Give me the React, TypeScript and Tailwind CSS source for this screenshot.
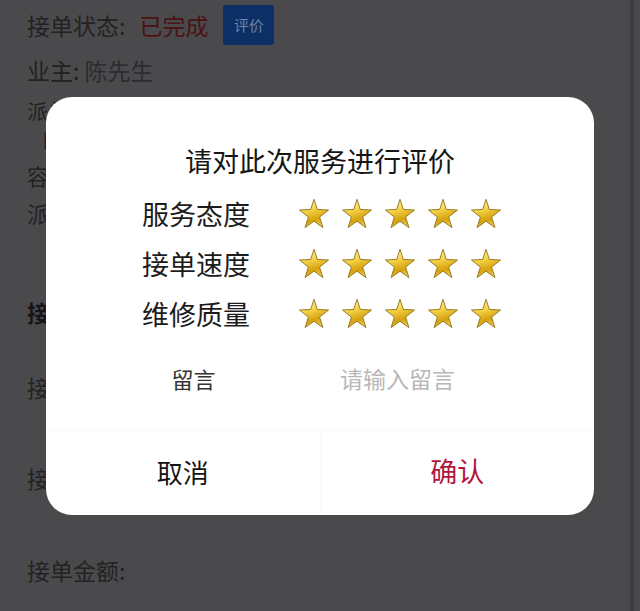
import React from 'react';

const font = { fontFamily: '"Noto Sans CJK SC", "Noto Sans", sans-serif' };

function Star() {
  return (
    <svg viewBox="0 0 24 24" className="w-[32px] h-[32px]">
      <defs>
        <linearGradient id="gold" x1="0.3" y1="0" x2="0.6" y2="1">
          <stop offset="0" stopColor="#fff7b8" />
          <stop offset="0.35" stopColor="#f6d64a" />
          <stop offset="0.72" stopColor="#d6a10e" />
          <stop offset="1" stopColor="#f0cf55" />
        </linearGradient>
      </defs>
      <polygon
        points="12,1 14.5,8.6 22.9,9 16.2,14.3 18.7,22.2 12,17.4 5.3,22.2 7.8,14.3 1.1,9 9.5,8.6"
        fill="url(#gold)"
        stroke="#8f7318"
        strokeWidth="0.7"
        strokeLinejoin="round"
      />
    </svg>
  );
}

function RatingRow({ label }: { label: string }) {
  return (
    <div className="flex items-center h-[50px]">
      <div className="w-[200px] text-center text-[27px] text-[#1c1c1c]">{label}</div>
      <div className="flex items-center gap-[11px] ml-[2px]">
        {[0, 1, 2, 3, 4].map((i) => (
          <Star key={i} />
        ))}
      </div>
    </div>
  );
}

export default function App() {
  return (
    <div className="relative w-[640px] h-[611px] overflow-hidden bg-[#4a4a4c]" style={font}>
      {/* dimmed page behind */}
      <div className="pl-[27px] pt-[5px] text-[23px] text-[#222] leading-[30px] whitespace-nowrap">
        <div className="flex items-center h-[40px]">
          <span className="leading-[40px]">接单状态:</span>
          <span className="ml-[14px] text-[#4a1214]">已完成</span>
          <span className="ml-[15px] w-[51px] h-[40px] rounded-[3px] bg-[#0c2f66] text-[15px] text-[#6f84a8] flex items-center justify-center">
            评价
          </span>
        </div>
        <div className="mt-[10px]">
          业主: <span className="text-[#2c2c2e]">陈先生</span>
        </div>
        <div className="mt-[10px] text-[21px]">派单时间:</div>
        <div className="pl-[15px] text-[20px]">口</div>
        <div className="mt-[5px] text-[22px]">容</div>
        <div className="mt-[8px]">派单地址:</div>
        <div className="mt-[69px] font-bold text-[#161616]">接单信息</div>
        <div className="mt-[45px]">接单人:</div>
        <div className="mt-[61px]">接单时间:</div>
        <div className="mt-[62px]">接单金额:</div>
      </div>
      <div className="absolute top-0 right-[6px] w-[4px] h-full bg-[#3d3d3f]" />

      {/* rating dialog */}
      <div className="absolute left-[46px] top-[97px] w-[548px] h-[418px] rounded-[26px] bg-white flex flex-col">
        <div className="pt-[48px] h-[32px] box-content text-center text-[27px] leading-[32px] text-[#161616]">
          请对此次服务进行评价
        </div>
        <div className="mt-[12px] pl-[50px]">
          <RatingRow label="服务态度" />
          <RatingRow label="接单速度" />
          <RatingRow label="维修质量" />
        </div>
        <div className="mt-[17px] pl-[50px] flex items-center h-[44px]">
          <div className="w-[195px] text-center text-[22px] text-[#333]">留言</div>
          <div className="ml-[49px] text-[23px] text-[#b8b8ba]">请输入留言</div>
        </div>
        <div className="mt-[30px] border-t border-[#f7f7f8] flex flex-1">
          <div className="flex-1 flex items-center justify-center border-r border-[#f9f9fa] text-[26px] text-[#141414] pb-[4px]">
            取消
          </div>
          <div className="flex-1 flex items-center justify-center text-[27px] text-[#b3163c] pb-[4px]">
            确认
          </div>
        </div>
      </div>
    </div>
  );
}
